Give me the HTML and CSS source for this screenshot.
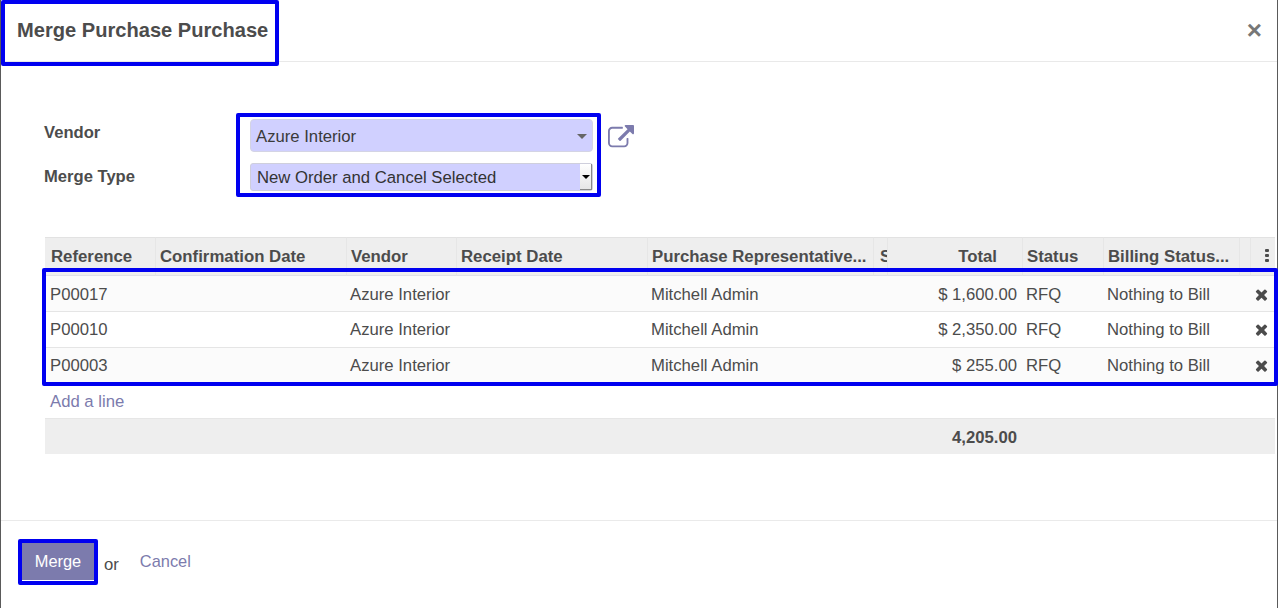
FILE: index.html
```html
<!DOCTYPE html>
<html lang="en">
<head>
    <meta charset="UTF-8">
    <meta name="viewport" content="width=device-width, initial-scale=1.0">
    <title>Merge Purchase Purchase</title>
    <link rel="stylesheet" href="styles.css">
</head>
<body>

    <div class="modal">
        <header class="modal-header">
            <h4 class="modal-title">Merge Purchase Purchase</h4>
            <span class="close">×</span>
        </header>

        <main class="modal-body">
            <div class="form">
                <label class="form-label">Vendor</label>
                <div class="form-value">
                    <div class="combo">
                        <span>Azure Interior</span>
                        <i class="combo-caret"></i>
                    </div>
                    <svg class="open-link" viewBox="0 0 1792 1792"><path d="M1408 928v320q0 119-84.5 203.5t-203.5 84.5h-832q-119 0-203.5-84.5t-84.5-203.5v-832q0-119 84.5-203.5t203.5-84.5h704q14 0 23 9t9 23v64q0 14-9 23t-23 9h-704q-66 0-113 47t-47 113v832q0 66 47 113t113 47h832q66 0 113-47t47-113v-320q0-14 9-23t23-9h64q14 0 23 9t9 23zm384-864v512q0 26-19 45t-45 19-45-19l-176-176-652 652q-10 10-23 10t-23-10l-114-114q-10-10-10-23t10-23l652-652-176-176q-19-19-19-45t19-45 45-19h512q26 0 45 19t19 45z"/></svg>
                </div>
                <label class="form-label">Merge Type</label>
                <div class="form-value">
                    <div class="native-select">
                        <span>New Order and Cancel Selected</span>
                        <b class="native-arrow"></b>
                    </div>
                </div>
            </div>

            <table class="list">
                <colgroup>
                    <col class="w110"><col class="w191"><col class="w110"><col class="w191"><col class="w226"><col class="w14">
                    <col class="w135"><col class="w81"><col class="w136"><col class="w11"><col class="w25">
                </colgroup>
                <thead>
                    <tr>
                        <th>Reference</th>
                        <th>Confirmation Date</th>
                        <th>Vendor</th>
                        <th>Receipt Date</th>
                        <th>Purchase Representative...</th>
                        <th class="clip">S</th>
                        <th class="num">Total</th>
                        <th>Status</th>
                        <th>Billing Status...</th>
                        <th></th>
                        <th class="kebab"><i></i><i></i><i></i></th>
                    </tr>
                </thead>
                <tbody>
                    <tr>
                        <td>P00017</td><td></td><td>Azure Interior</td><td></td><td>Mitchell Admin</td><td></td>
                        <td class="amount">$ 1,600.00</td><td>RFQ</td><td>Nothing to Bill</td><td></td>
                        <td class="trash"><svg viewBox="0 0 1792 1792"><path d="M1490 1322q0 40-28 68l-136 136q-28 28-68 28t-68-28l-294-294-294 294q-28 28-68 28t-68-28l-136-136q-28-28-28-68t28-68l294-294-294-294q-28-28-28-68t28-68l136-136q28-28 68-28t68 28l294 294 294-294q28-28 68-28t68 28l136 136q28 28 28 68t-28 68l-294 294 294 294q28 28 28 68z"/></svg></td>
                    </tr>
                    <tr>
                        <td>P00010</td><td></td><td>Azure Interior</td><td></td><td>Mitchell Admin</td><td></td>
                        <td class="amount">$ 2,350.00</td><td>RFQ</td><td>Nothing to Bill</td><td></td>
                        <td class="trash"><svg viewBox="0 0 1792 1792"><path d="M1490 1322q0 40-28 68l-136 136q-28 28-68 28t-68-28l-294-294-294 294q-28 28-68 28t-68-28l-136-136q-28-28-28-68t28-68l294-294-294-294q-28-28-28-68t28-68l136-136q28-28 68-28t68 28l294 294 294-294q28-28 68-28t68 28l136 136q28 28 28 68t-28 68l-294 294 294 294q28 28 28 68z"/></svg></td>
                    </tr>
                    <tr>
                        <td>P00003</td><td></td><td>Azure Interior</td><td></td><td>Mitchell Admin</td><td></td>
                        <td class="amount">$ 255.00</td><td>RFQ</td><td>Nothing to Bill</td><td></td>
                        <td class="trash"><svg viewBox="0 0 1792 1792"><path d="M1490 1322q0 40-28 68l-136 136q-28 28-68 28t-68-28l-294-294-294 294q-28 28-68 28t-68-28l-136-136q-28-28-28-68t28-68l294-294-294-294q-28-28-28-68t28-68l136-136q28-28 68-28t68 28l294 294 294-294q28-28 68-28t68 28l136 136q28 28 28 68t-28 68l-294 294 294 294q28 28 28 68z"/></svg></td>
                    </tr>
                    <tr class="add-row">
                        <td colspan="11"><a class="link">Add a line</a></td>
                    </tr>
                </tbody>
                <tfoot>
                    <tr>
                        <td colspan="6"></td>
                        <td class="amount">4,205.00</td>
                        <td colspan="4"></td>
                    </tr>
                </tfoot>
            </table>
        </main>

        <footer class="modal-footer">
            <button class="btn-merge">Merge</button>
            <span class="or">or</span>
            <a class="link cancel">Cancel</a>
        </footer>

        <!-- Blue annotation boxes drawn on top of the dialog -->
        <div class="mark mark-title"></div>
        <div class="mark mark-fields"></div>
        <div class="mark mark-rows"></div>
        <div class="mark mark-button"></div>
    </div>

</body>
</html>
```

FILE: styles.css
```css
* {
    box-sizing: border-box;
    margin: 0;
    padding: 0;
}

body {
    height: 100vh;
    overflow: hidden;
    padding: 0 1px;
    background: #5a5a5a;
    color: #4c4c4c;
    font-family: 'Liberation Sans', Arial, sans-serif;
    font-size: 16.7px;
}

.modal {
    position: relative;
    display: flex;
    flex-direction: column;
    height: 100%;
    background: #fff;
}

/* Header */
.modal-header {
    display: flex;
    align-items: center;
    justify-content: space-between;
    height: 62px;
    padding: 0 15px 1px 16px;
    border-bottom: 1px solid #e9e9e9;
}

.modal-title {
    font-size: 20.1px;
    font-weight: bold;
}

.close {
    font-size: 26px;
    font-weight: bold;
    color: #777;
}

/* Form */
.modal-body {
    flex: 1;
    padding: 0 2px 0 44px;
}

.form {
    display: grid;
    grid-template-columns: 206px 1fr;
    grid-template-rows: 44px 33px;
    padding-top: 57px;
    margin-left: -1px;
    height: 175px;
}

.form-label {
    font-weight: bold;
    font-size: 16.6px;
    padding-top: 4px;
}

.form-value {
    display: flex;
    align-items: flex-start;
}

.combo {
    display: flex;
    align-items: center;
    justify-content: space-between;
    width: 343px;
    height: 33px;
    padding: 2px 5px 0 5px;
    background: #d0d0ff;
    border: 1px solid #d4d4e4;
    border-radius: 4px;
    color: #3a3a3a;
}

.combo-caret {
    border-left: 5px solid transparent;
    border-right: 5px solid transparent;
    border-top: 5px solid #666;
}

.open-link {
    width: 26px;
    height: 26px;
    margin: 6px 0 0 15px;
    fill: #7c7bad;
}

.native-select {
    display: flex;
    align-items: center;
    justify-content: space-between;
    width: 343px;
    height: 28px;
    padding-left: 6px;
    background: #d0d0ff;
    border: 1px solid #cfcfdc;
    border-radius: 3px;
    color: #333;
}

.native-select span {
    padding-top: 2px;
}

.native-arrow {
    display: flex;
    align-items: center;
    justify-content: center;
    width: 12px;
    height: 26px;
    background: linear-gradient(#fff, #e6e6e6);
    border-right: 1px solid #888;
    border-bottom: 1px solid #888;
}

.native-arrow::before {
    content: '';
    border-left: 4px solid transparent;
    border-right: 4px solid transparent;
    border-top: 4px solid #000;
}

/* List */
.list {
    width: 1230px;
    table-layout: fixed;
    border-collapse: separate;
    border-spacing: 0;
}

.w110 { width: 110px; }
.w191 { width: 191px; }
.w226 { width: 226px; }
.w14 { width: 14px; }
.w135 { width: 135px; }
.w136 { width: 136px; }
.w81 { width: 81px; }
.w11 { width: 11px; }
.w25 { width: 25px; }

.list th {
    height: 39px;
    padding: 0 4px 0 4px;
    background: #eee;
    border-top: 1px solid #e2e2e2;
    border-left: 1px solid #e6e6e6;
    border-bottom: 1px solid #e0e0e8;
    font-size: 16.8px;
    font-weight: bold;
    text-align: left;
    white-space: nowrap;
    overflow: hidden;
}

.list th:first-child {
    padding-left: 6px;
    border-left: none;
}

.list th.clip {
    padding: 0 0 0 6px;
}

.list th.num {
    padding-right: 25px;
    text-align: right;
}

.list th.kebab {
    padding: 0 0 0 14px;
}

.kebab i {
    display: block;
    width: 4px;
    height: 3px;
    margin-bottom: 2px;
    background: #4c4c4c;
    border-radius: 1px;
}

.list tbody td {
    height: 36px;
    padding: 0 4px;
    border-top: 1px solid #e5e5e5;
    white-space: nowrap;
}

.list tbody td:first-child {
    padding-left: 5px;
}

.list tbody tr:nth-child(odd) td {
    background: #fbfbfb;
}

.list tbody tr:first-child td {
    height: 35px;
    padding-top: 2px;
    border-top: none;
}

.list tbody td.amount,
.list tfoot td.amount {
    padding-right: 5px;
    text-align: right;
}

.list tbody td.trash {
    padding: 0 0 0 3px;
}

.trash svg {
    display: block;
    width: 17px;
    height: 17px;
    margin-top: -1px;
    fill: #4c4c4c;
}

.list tbody tr.add-row td {
    height: 35px;
    padding-top: 3px;
    background: #fff;
    border-top: none;
}

.list tfoot td {
    height: 36px;
    padding-top: 2px;
    background: #eee;
    border-top: 1px solid #e6e6e6;
    font-weight: bold;
}

.link {
    color: #7c7bad;
    text-decoration: none;
}

/* Footer */
.modal-footer {
    display: flex;
    align-items: center;
    height: 88px;
    padding: 0 0 7px 21px;
    border-top: 1px solid #eaeaea;
}

.btn-merge {
    width: 72px;
    height: 38px;
    padding-top: 1px;
    background: #7c7bad;
    border: none;
    color: #fff;
    font-family: inherit;
    font-size: 16.4px;
}

.or {
    margin: 7px 0 0 10px;
}

.cancel {
    margin: 1px 0 0 21px;
    font-size: 16.4px;
}

/* Annotation boxes */
.mark {
    position: absolute;
    border: 4px solid #0000f0;
    border-radius: 2px;
    pointer-events: none;
}

.mark-title {
    left: 0;
    top: 0;
    width: 278px;
    height: 66px;
}

.mark-fields {
    left: 235px;
    top: 113px;
    width: 365px;
    height: 84px;
}

.mark-rows {
    left: 41px;
    top: 268px;
    width: 1236px;
    height: 118px;
}

.mark-button {
    left: 17px;
    top: 539px;
    width: 80px;
    height: 46px;
}
```
